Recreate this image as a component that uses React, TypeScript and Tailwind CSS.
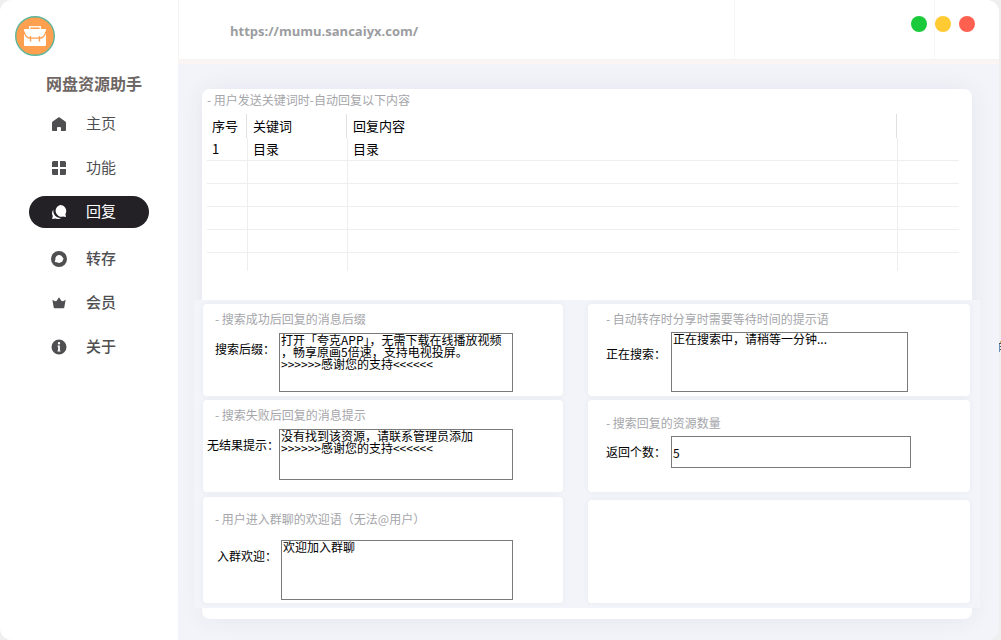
import React, { useState } from "react";
import clsx from "clsx";

type NavKey = "home" | "features" | "reply" | "transfer" | "member" | "about";

interface NavItem {
  key: NavKey;
  label: string;
  bold?: boolean;
  icon: React.ReactNode;
}

const iconProps = {
  width: 16,
  height: 16,
  viewBox: "0 0 16 16",
  fill: "currentColor",
  "aria-hidden": true,
};

const mainNav: NavItem[] = [
  {
    key: "home",
    label: "主页",
    icon: (
      <svg {...iconProps}>
        <path d="M7.3 1.4a1.2 1.2 0 0 1 1.4 0l5.6 4.2q.7.5.7 1.3v7.2a.9.9 0 0 1-.9.9H10V12a1 1 0 0 0-1-1H7a1 1 0 0 0-1 1v3H1.9a.9.9 0 0 1-.9-.9V6.9q0-.8.7-1.3z" />
      </svg>
    ),
  },
  {
    key: "features",
    label: "功能",
    icon: (
      <svg {...iconProps}>
        <path d="M2.500 1H7v6H1V2.500Q1 1 2.500 1zM9 1h4.500Q15 1 15 2.500V7H9zM1 9h6v6H2.500Q1 15 1 13.500zM9 9h6v4.500q0 1.500-1.500 1.500H9z" />
      </svg>
    ),
  },
  {
    key: "reply",
    label: "回复",
    icon: (
      <svg {...iconProps}>
        <path d="M9.200.9a6 6 0 0 1 5.200 9l.6 3.100-2.900-.4A6 6 0 1 1 9.200.9z" />
        <path d="M2.500 5.500a6.900 6.900 0 0 0 7.800 8.400 5.600 5.600 0 0 1-5.500.6l-3.700.5.7-3.100a5.700 5.700 0 0 1 .7-6.400z" />
      </svg>
    ),
  },
];

const moreNav: NavItem[] = [
  {
    key: "transfer",
    label: "转存",
    bold: true,
    icon: (
      <svg {...iconProps}>
        <path
          fillRule="evenodd"
          d="M8 0a8 8 0 1 1 0 16A8 8 0 0 1 8 0zm.4 4A3.900 3.900 0 0 0 4.400 8.500L3.700 11l2.200.2A4 4 0 0 0 12 8.900l.5-1.600-.8-.8A3.900 3.900 0 0 0 8.400 4z"
        />
      </svg>
    ),
  },
  {
    key: "member",
    label: "会员",
    bold: true,
    icon: (
      <svg {...iconProps}>
        <path d="M8 2.300 10.500 6 12 6.300l2.600-1.500-1.300 7.700a1 1 0 0 1-1 .8H3.700a1 1 0 0 1-1-.8L1.400 4.800 4 6.300 5.500 6z" />
      </svg>
    ),
  },
  {
    key: "about",
    label: "关于",
    bold: true,
    icon: (
      <svg {...iconProps}>
        <path
          fillRule="evenodd"
          d="M8 .5a7.500 7.500 0 1 1 0 15 7.500 7.500 0 0 1 0-15zM8 3a1.200 1.200 0 1 0 0 2.400A1.200 1.200 0 0 0 8 3zM6.500 6.600v1h.6v3.800h-.6v1h3v-1h-.6V6.600z"
        />
      </svg>
    ),
  },
];

const rows = [
  { id: "1", keyword: "目录", content: "目录" },
  { id: "", keyword: "", content: "" },
  { id: "", keyword: "", content: "" },
  { id: "", keyword: "", content: "" },
  { id: "", keyword: "", content: "" },
];

function Logo() {
  return (
    <svg className="size-10" viewBox="0 0 40 40" role="img" aria-label="logo">
      <circle cx="20" cy="20" r="19.300" fill="#ff9f50" stroke="#5db69b" strokeWidth="1.400" />
      <path d="M14.700 13.500V10.700h10.600v2.800" fill="none" stroke="#fff5e8" strokeWidth="1.500" />
      <rect x="9" y="13" width="22" height="17" rx=".8" fill="#fff" />
      <path
        d="M9 15.500c1 3.800 3.200 6.700 6.300 6.700h9.400c3.100 0 5.300-2.900 6.300-6.700"
        fill="none"
        stroke="#ff9f50"
        strokeWidth="1.200"
      />
      <path d="M15.500 20v5.500M24.500 20v5.500" stroke="#ff9f50" strokeWidth="1.400" />
    </svg>
  );
}

interface NavListProps {
  items: NavItem[];
  active: NavKey;
  onSelect: (key: NavKey) => void;
}

function NavList({ items, active, onSelect }: NavListProps) {
  return (
    <ul className="flex flex-col gap-3">
      {items.map((item) => (
        <li key={item.key}>
          <button
            type="button"
            onClick={() => onSelect(item.key)}
            className={clsx(
              "flex h-8 w-full items-center gap-[19px] rounded-full pl-[22px] text-[15px]",
              item.bold && "font-medium",
              active === item.key ? "bg-[#232126] text-white" : "text-[#4f4f51]"
            )}
          >
            {item.icon}
            <span className="pb-0.5">{item.label}</span>
          </button>
        </li>
      ))}
    </ul>
  );
}

interface CardProps {
  title?: string;
  className?: string;
  children?: React.ReactNode;
}

function Card({ title, className, children }: CardProps) {
  return (
    <section className={clsx("rounded-sm bg-white shadow-[0_0_5px_rgba(60,60,110,0.05)]", className)}>
      {title && <h2 className="text-xs leading-4 text-[#a5a6aa]">{title}</h2>}
      {children}
    </section>
  );
}

const fieldClass =
  "resize-none border border-[#7a7a7a] bg-white px-px text-xs leading-3 text-black outline-none";

export default function App() {
  const [active, setActive] = useState<NavKey>("reply");
  const [suffix, setSuffix] = useState(
    "打开「夸克APP」，无需下载在线播放视频\n，畅享原画5倍速，支持电视投屏。\n>>>>>>感谢您的支持<<<<<<"
  );
  const [notFound, setNotFound] = useState(
    "没有找到该资源，请联系管理员添加\n>>>>>>感谢您的支持<<<<<<"
  );
  const [welcome, setWelcome] = useState("欢迎加入群聊");
  const [searching, setSearching] = useState("正在搜索中，请稍等一分钟...");
  const [count, setCount] = useState("5");

  return (
    <div className="relative min-h-screen bg-[#efefef] pr-0.5 font-['Noto_Sans_CJK_SC',sans-serif]">
      <div className="flex min-h-screen overflow-hidden rounded-xl bg-[#f3f4f9]">
        {/* Sidebar */}
        <aside className="w-[178px] shrink-0 bg-white pt-4">
          <div className="pl-[15px]">
            <Logo />
          </div>
          <h1 className="mt-[15px] pl-[46px] text-base leading-6 font-bold text-[#6e6664]">网盘资源助手</h1>
          <nav className="mt-[13px] flex flex-col gap-[15px] px-[29px]">
            <NavList items={mainNav} active={active} onSelect={setActive} />
            <NavList items={moreNav} active={active} onSelect={setActive} />
          </nav>
        </aside>

        <div className="flex min-w-0 flex-1 flex-col">
          {/* Title bar */}
          <header className="relative flex h-[60px] border-b border-l border-[#f4f4f5] bg-white">
            <div className="flex flex-1 items-center border-r border-[#f6f6f6] pt-0.5 pl-[51px]">
              <a
                href="https://mumu.sancaiyx.com/"
                className="font-['Open_Sans',sans-serif] text-[13px] leading-5 font-bold text-[#9b9d9f]"
              >
                https://mumu.sancaiyx.com/
              </a>
            </div>
            <div className="w-[200px] border-r border-[#f6f6f6]" />
            <div className="w-16" />
            <div className="absolute top-4 right-6 flex gap-2">
              <button type="button" aria-label="最小化" className="size-4 rounded-full bg-[#1aca3a]" />
              <button type="button" aria-label="最大化" className="size-4 rounded-full bg-[#ffca32]" />
              <button type="button" aria-label="关闭" className="size-4 rounded-full bg-[#ff6050]" />
            </div>
          </header>
          <div className="h-1 bg-[#fbf4f4]" />

          <main className="flex-1 pt-[25px] pr-[27px] pb-[21px] pl-6">
            <div className="rounded-lg bg-white shadow-[0_0_24px_rgba(60,60,110,0.07)]">
              {/* Keyword table */}
              <section className="min-h-[211px] pt-[3px] pr-[13px] pl-[5px]">
                <h2 className="text-xs leading-4 text-[#a5a6aa]">- 用户发送关键词时-自动回复以下内容</h2>
                <table className="mt-1.5 w-full table-fixed border-separate border-spacing-0 text-left text-[13px] text-black">
                  <colgroup>
                    <col className="w-[41px]" />
                    <col className="w-[100px]" />
                    <col />
                    <col className="w-[61px]" />
                  </colgroup>
                  <thead>
                    <tr>
                      {["序号", "关键词", "回复内容"].map((name) => (
                        <th key={name} className="p-0 font-normal">
                          <div className="mr-px h-6 border-r border-[#e0e0e0] pl-[5px] leading-6">{name}</div>
                        </th>
                      ))}
                      <td />
                    </tr>
                  </thead>
                  <tbody>
                    {rows.map((row, i) => (
                      <tr key={i} className="h-[23px] leading-[22px]">
                        <td className="border-r border-b border-[#eeeeee] p-0 pl-[5px]">{row.id}</td>
                        <td className="border-r border-b border-[#eeeeee] p-0 pl-[5px]">{row.keyword}</td>
                        <td className="border-r border-b border-[#eeeeee] p-0 pl-[5px]">{row.content}</td>
                        <td className="border-b border-[#eeeeee] p-0" />
                      </tr>
                    ))}
                    <tr className="h-[18px]">
                      <td className="border-r border-[#eeeeee] p-0" />
                      <td className="border-r border-[#eeeeee] p-0" />
                      <td className="border-r border-[#eeeeee] p-0" />
                      <td className="p-0" />
                    </tr>
                  </tbody>
                </table>
              </section>

              {/* Reply settings */}
              <div className="-mx-2 grid grid-cols-[360fr_382fr] gap-x-[25px] bg-[#f3f4f9] pt-1 pr-2.5 pb-[5px] pl-[9px]">
                <div className="flex flex-col gap-1">
                  <Card title="- 搜索成功后回复的消息后缀" className="h-[92px] pt-[7px] pl-3">
                    <div className="mt-1.5 flex">
                      <label htmlFor="suffix" className="w-16 pt-2 text-xs leading-4 text-black">
                        搜索后缀：
                      </label>
                      <textarea
                        id="suffix"
                        value={suffix}
                        onChange={(e) => setSuffix(e.target.value)}
                        className={clsx(fieldClass, "h-[59px] w-[234px]")}
                      />
                    </div>
                  </Card>
                  <Card title="- 搜索失败后回复的消息提示" className="h-[92px] pt-[7px] pl-3">
                    <div className="mt-1.5 -ml-2 flex">
                      <label htmlFor="not-found" className="w-[72px] pt-2 text-xs leading-4 text-black">
                        无结果提示：
                      </label>
                      <textarea
                        id="not-found"
                        value={notFound}
                        onChange={(e) => setNotFound(e.target.value)}
                        className={clsx(fieldClass, "h-[51px] w-[234px]")}
                      />
                    </div>
                  </Card>
                  <Card title="- 用户进入群聊的欢迎语（无法@用户）" className="mt-px h-[106px] pt-3.5 pl-3">
                    <div className="mt-[13px] ml-0.5 flex">
                      <label htmlFor="welcome" className="w-16 pt-2 text-xs leading-4 text-black">
                        入群欢迎：
                      </label>
                      <textarea
                        id="welcome"
                        value={welcome}
                        onChange={(e) => setWelcome(e.target.value)}
                        className={clsx(fieldClass, "h-[60px] w-[232px]")}
                      />
                    </div>
                  </Card>
                </div>

                <div className="flex flex-col gap-1">
                  <Card title="- 自动转存时分享时需要等待时间的提示语" className="h-[92px] pt-[7px] pl-[18px]">
                    <div className="mt-[5px] flex">
                      <label htmlFor="searching" className="w-[65px] pt-3.5 text-xs leading-4 text-black">
                        正在搜索：
                      </label>
                      <textarea
                        id="searching"
                        value={searching}
                        onChange={(e) => setSearching(e.target.value)}
                        className={clsx(fieldClass, "h-[60px] w-[237px]")}
                      />
                    </div>
                  </Card>
                  <Card title="- 搜索回复的资源数量" className="h-[92px] pt-[15px] pl-[18px]">
                    <div className="mt-[5px] flex items-center">
                      <label htmlFor="count" className="w-[65px] text-xs leading-4 text-black">
                        返回个数：
                      </label>
                      <input
                        id="count"
                        type="text"
                        value={count}
                        onChange={(e) => setCount(e.target.value)}
                        className={clsx(fieldClass, "h-8 w-[240px]")}
                      />
                    </div>
                  </Card>
                  <Card className="mt-1 flex-1" />
                </div>
              </div>
              <div className="h-[11px]" />
            </div>
          </main>
        </div>
      </div>

      {/* Edge marker beside the window frame */}
      <svg className="absolute top-[341px] right-0" width="2" height="12" viewBox="0 0 2 12" aria-hidden="true">
        <path d="M1 0h1v2H1z" fill="#d9a565" />
        <path d="M0 2h2v1H0zM0 5h2v1H0zM0 8h2v1H0z" fill="#4a4a55" />
        <path d="M0 3h1v8H0z" fill="#6b8fb5" />
      </svg>
    </div>
  );
}
